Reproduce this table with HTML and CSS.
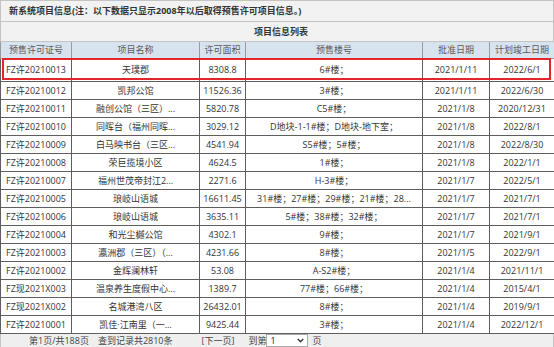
FILE: index.html
```html
<!DOCTYPE html>
<html lang="zh-CN">
<head>
<meta charset="utf-8">
<title>新系统项目信息</title>
<link rel="stylesheet" href="styles.css">
</head>
<body>
<div class="page">
  <div class="notice">新系统项目信息(注：以下数据只显示2008年以后取得预售许可项目信息。)</div>
  <div class="list-title">项目信息列表</div>
  <table class="grid">
    <colgroup>
      <col class="c1"><col class="c2"><col class="c3"><col class="c4"><col class="c5"><col class="c6">
    </colgroup>
    <thead>
      <tr><th>预售许可证号</th><th>项目名称</th><th>许可面积</th><th>预售楼号</th><th>批准日期</th><th>计划竣工日期</th></tr>
    </thead>
    <tbody>
      <tr class="first"><td>FZ许20210013</td><td>天璞郡</td><td>8308.8</td><td>6#楼；</td><td>2021/1/11</td><td>2022/6/1</td></tr>
      <tr><td>FZ许20210012</td><td>凯邦公馆</td><td>11526.36</td><td>3#楼；</td><td>2021/1/11</td><td>2022/6/30</td></tr>
      <tr><td>FZ许20210011</td><td>融创公馆（三区）...</td><td>5820.78</td><td>C5#楼；</td><td>2021/1/8</td><td>2020/12/31</td></tr>
      <tr><td>FZ许20210010</td><td>同晖台（福州同晖...</td><td>3029.12</td><td>D地块-1-1#楼；D地块-地下室；</td><td>2021/1/8</td><td>2022/8/1</td></tr>
      <tr><td>FZ许20210009</td><td>白马映书台（三区...</td><td>4541.94</td><td>S5#楼；5#楼；</td><td>2021/1/8</td><td>2022/8/30</td></tr>
      <tr><td>FZ许20210008</td><td>荣巨揽境小区</td><td>4624.5</td><td>1#楼；</td><td>2021/1/8</td><td>2022/1/1</td></tr>
      <tr><td>FZ许20210007</td><td>福州世茂帝封江2...</td><td>2271.6</td><td>H-3#楼；</td><td>2021/1/7</td><td>2022/5/1</td></tr>
      <tr><td>FZ许20210005</td><td>琅岐山语城</td><td>16611.45</td><td>31#楼；27#楼；29#楼；21#楼；28...</td><td>2021/1/7</td><td>2021/7/1</td></tr>
      <tr><td>FZ许20210006</td><td>琅岐山语城</td><td>3635.11</td><td>5#楼；38#楼；32#楼；</td><td>2021/1/7</td><td>2021/7/1</td></tr>
      <tr><td>FZ许20210004</td><td>和光尘樾公馆</td><td>4302.1</td><td>9#楼；</td><td>2021/1/7</td><td>2021/9/1</td></tr>
      <tr><td>FZ许20210003</td><td>瀛洲郡（三区）（...</td><td>4231.66</td><td>8#楼；</td><td>2021/1/5</td><td>2022/9/1</td></tr>
      <tr><td>FZ许20210002</td><td>金辉澜林轩</td><td>53.08</td><td>A-S2#楼；</td><td>2021/1/4</td><td>2021/11/1</td></tr>
      <tr><td>FZ现2021X003</td><td>温泉养生度假中心...</td><td>1389.7</td><td>77#楼；66#楼；</td><td>2021/1/4</td><td>2015/4/1</td></tr>
      <tr><td>FZ现2021X002</td><td>名城港湾八区</td><td>26432.01</td><td>8#楼；</td><td>2021/1/4</td><td>2019/9/1</td></tr>
      <tr><td>FZ许20210001</td><td>凯佳·江南里（一...</td><td>9425.44</td><td>3#楼；</td><td>2021/1/4</td><td>2022/12/1</td></tr>
    </tbody>
  </table>
  <div class="pager">
    <span class="pg-info">第1页/共188页</span>
    <span class="pg-count">查到记录共2810条</span>
    <span class="pg-next">[下一页]</span>
    <span class="pg-goto">到第</span>
    <span class="pg-select"><span>1</span><svg width="7" height="5" viewBox="0 0 7 5"><path d="M0.8 1 L3.5 3.8 L6.2 1" fill="none" stroke="#333" stroke-width="1.3"/></svg></span>
    <span class="pg-unit">页</span>
  </div>
  <div class="highlight"></div>
</div>
</body>
</html>
```

FILE: styles.css
```css
html, body {
  margin: 0;
  padding: 0;
  background: #ffffff;
  overflow: hidden;
}

.page {
  position: relative;
  width: 554px;
  font-family: "Open Sans", "Noto Sans CJK SC", sans-serif;
  font-size: 9px;
  color: #333333;
}

.notice {
  height: 20px;
  line-height: 20px;
  padding-left: 8px;
  background: #f2f2f2;
  border: 1px solid #c4c4c4;
  font-weight: bold;
  color: #333333;
  white-space: nowrap;
}

.list-title {
  height: 19px;
  line-height: 19px;
  text-align: center;
  padding-left: 8px;
  background: #f2f2f2;
  border: 1px solid #c4c4c4;
  border-top: none;
  font-weight: bold;
  color: #333333;
}

.grid {
  width: 554px;
  border-collapse: collapse;
  table-layout: fixed;
}

.c1 { width: 71px; }
.c2 { width: 128px; }
.c3 { width: 46px; }
.c4 { width: 177px; }
.c5 { width: 67px; }
.c6 { width: 65px; }

.grid th {
  height: 16px;
  padding: 0;
  line-height: 12px;
  background: #d8e3f0;
  color: #5a5a5a;
  font-weight: normal;
  border: 1px solid #9a9a9a;
  border-top: none;
  text-align: center;
  white-space: nowrap;
}

.grid td {
  height: 17px;
  padding: 0;
  line-height: 12px;
  border: 1px solid #5e5e5e;
  text-align: center;
  white-space: nowrap;
  overflow: hidden;
}

.grid tr.first td {
  height: 22px;
}

.pager {
  display: flex;
  align-items: center;
  height: 13px;
  line-height: 12px;
  background: #efefef;
  border: 1px solid #c4c4c4;
  border-top: none;
  color: #444444;
  white-space: nowrap;
}

.pg-info { margin-left: 28px; }
.pg-count { margin-left: 9px; }
.pg-next { margin-left: 29px; }
.pg-goto { margin-left: 14px; }

.pg-select {
  display: flex;
  align-items: center;
  justify-content: space-between;
  box-sizing: border-box;
  width: 42px;
  height: 13px;
  margin-left: 0;
  padding: 0 3px 0 3px;
  background: #ffffff;
  border: 1px solid #a9a9a9;
  color: #222222;
}

.pg-unit { margin-left: 4px; }

.highlight {
  position: absolute;
  left: 2px;
  top: 58px;
  width: 545px;
  height: 18px;
  border: 2px solid #e3262b;
}
```
